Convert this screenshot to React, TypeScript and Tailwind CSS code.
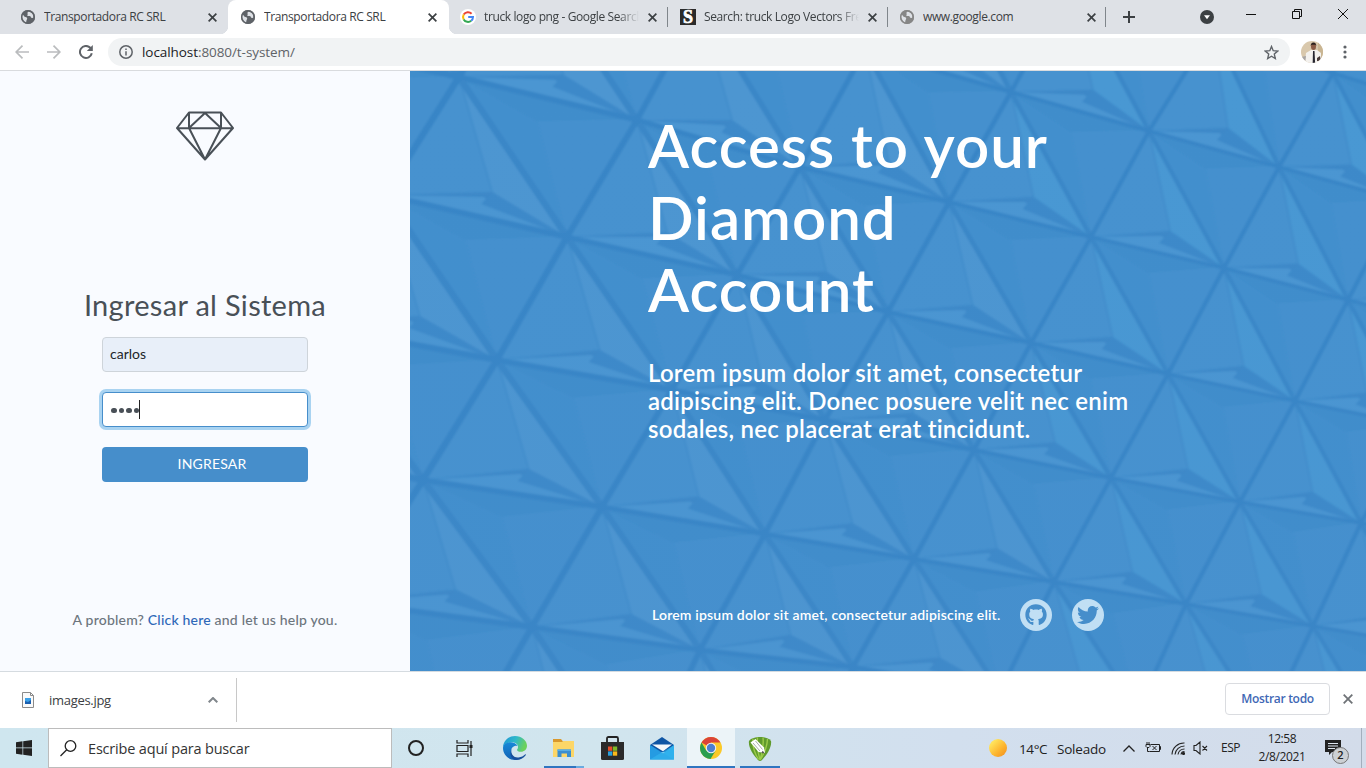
import React from "react";
import { FaGithub, FaTwitter } from "react-icons/fa";

type Pt = [number, number];

const rows: Pt[][] = [
  [[600, -155], [770, -105], [930, -60], [1070, -15], [1213, 28], [1333, 73], [1450, 110], [1560, 140], [1660, 170]],
  [[530, -40], [700, 5], [865, 50], [1011, 92], [1149, 131], [1279, 167], [1400, 200], [1510, 230], [1610, 260]],
  [[459, 77], [637, 120], [800, 167], [949, 202], [1091, 237], [1224, 268], [1348, 300], [1465, 328], [1570, 350]],
  [[385, 195], [567, 237], [737, 275], [888, 312], [1031, 343], [1168, 374], [1295, 401], [1415, 425], [1520, 450]],
  [[310, 325], [497, 360], [672, 390], [825, 420], [974, 450], [1111, 478], [1240, 502], [1361, 523], [1475, 545]],
  [[240, 450], [423, 480], [602, 507], [765, 534], [914, 559], [1054, 582], [1186, 604], [1313, 626], [1430, 646]],
  [[150, 570], [345, 602], [532, 627], [700, 650], [853, 667], [1000, 692], [1138, 710], [1265, 728], [1385, 745]],
  [[60, 720], [265, 740], [455, 760], [637, 785], [790, 800], [940, 820], [1080, 840], [1210, 855], [1330, 870]],
];
const leftFill: Pt[] = [[350, -90], [345, -90], [270, 35], [190, 150], [110, 285], [40, 410], [-50, 530], [-150, 690]];
const grid = rows.map((r, i) => [leftFill[i], ...r]);

const mix = (a: Pt, b: Pt, c: Pt, u: number, v: number, w: number): Pt => [
  a[0] * u + b[0] * v + c[0] * w,
  a[1] * u + b[1] * v + c[1] * w,
];
const pts = (...p: Pt[]) => p.map((q) => q[0].toFixed(1) + "," + q[1].toFixed(1)).join(" ");

function Facets() {
  const faces: React.ReactNode[] = [];
  const lines: React.ReactNode[] = [];
  for (let k = 0; k < grid.length; k++) {
    for (let j = 0; j < grid[k].length - 1; j++) {
      const p = grid[k][j];
      const q = grid[k][j + 1];
      const w = Math.max(4.2, 8 - p[0] / 300);
      const id = k + "-" + j;
      lines.push(<polyline key={"h" + id} points={pts(p, q)} stroke="#3985c6" strokeWidth={w * 0.85} />);
      if (k + 1 >= grid.length) continue;
      const l = grid[k + 1][j];
      const r = grid[k + 1][j + 1];
      const i = mix(p, l, r, 0.205, 0.29, 0.505);
      const i2: Pt = [i[0] + 1, i[1] + 8];
      const n = mix(p, q, r, 0.48, 0.326, 0.194);
      faces.push(
        <g key={id}>
          <polygon points={pts(p, l, i)} fill="#4692cf" />
          <polygon points={pts(p, i, r)} fill={p[0] > 1000 ? "#4998d3" : "#4e96d1"} />
          <polygon points={pts(l, i, r)} fill="#3c88c8" />
          <polygon points={pts(l, [i2[0] - 10, i2[1] - 3], r)} fill="#4c96d2" />
          <polygon points={pts(i, [i2[0] - 12, i2[1] + 4], r)} fill="#3d89c9" />
          <polygon points={pts(p, n, r)} fill="#438fcd" />
          <polygon points={pts(p, n, q)} fill="#418dcb" />
          <polygon points={pts(n, q, r)} fill="#4590ce" />
          <polyline points={pts(p, i)} stroke="#428ecc" strokeWidth="2" />
          <polyline points={pts(n, q)} stroke="#4893d0" strokeWidth="1" />
        </g>
      );
      lines.push(
        <g key={"l" + id} strokeWidth={w}>
          <polyline points={pts(p, l)} stroke="#3985c6" />
          <polyline points={pts(p, r)} stroke="#3b87c7" />
          <circle cx={p[0]} cy={p[1]} r={w * 0.75} fill="#3985c6" stroke="none" />
        </g>
      );
    }
  }
  return (
    <svg className="absolute inset-0" width="956" height="600" viewBox="410 71 956 600">
      <defs>
        <filter id="soft" x="0" y="0" width="1" height="1">
          <feGaussianBlur stdDeviation="1.1" />
        </filter>
        <linearGradient id="shade" x1="0" y1="0" x2="0" y2="1">
          <stop offset="0" stopColor="#4290cf" stopOpacity="0" />
          <stop offset="1" stopColor="#4a8bca" stopOpacity=".14" />
        </linearGradient>
      </defs>
      <g filter="url(#soft)" fill="none">
        {faces}
        {lines}
      </g>
      <rect x="410" y="71" width="956" height="600" fill="url(#shade)" />
    </svg>
  );
}

function Globe({ color }: { color: string }) {
  return (
    <svg width="16" height="16" viewBox="0 0 16 16">
      <circle cx="8" cy="8" r="7" fill={color} />
      <path d="M3 7.2c0-.8.2-1.6.6-2.3l2 2.5 1.6.6c.9.3 1.2 1 .9 1.700l-.6 1.300-.4 2.200C4.900 12.900 3 10.400 3 7.200z" fill="#dee1e6" transform="translate(-1 .3)" />
      <path d="M8.300 2.500l-1 1.500.6 1.300-1 .900 1.300.800 2 .100 1 1.700 2 .200c.7-2.600-.8-5.900-4.900-6.500z" fill="#dee1e6" />
      <circle cx="8" cy="8" r="6.300" fill="none" stroke={color} strokeWidth="1.500" />
    </svg>
  );
}

function GoogleG() {
  return (
    <svg width="16" height="16" viewBox="0 0 16 16" fill="none" strokeWidth="2">
      <circle cx="8" cy="8" r="8" fill="#fff" />
      <path d="M11.600 4.700A5 5 0 0 0 3.700 5.600" stroke="#ea4335" />
      <path d="M3.700 5.600a5 5 0 0 0 0 4.800" stroke="#fbbc05" />
      <path d="M3.700 10.400a5 5 0 0 0 7.500 1.400" stroke="#34a853" />
      <path d="M11.200 11.800A5 5 0 0 0 13 8H8.200" stroke="#4285f4" />
    </svg>
  );
}

function SIcon() {
  return (
    <div className="flex h-4 w-4 items-center justify-center bg-[#2b2b2b] font-['Liberation_Serif',serif] text-[18px] leading-4 font-bold text-white [-webkit-text-stroke:0.7px_#fff]">
      S
    </div>
  );
}

function Cross({ size, color, width }: { size: number; color: string; width: number }) {
  return (
    <svg width={size} height={size} viewBox="0 0 10 10" stroke={color} strokeWidth={width}>
      <path d="M.7.7l8.600 8.600M9.300.7L.7 9.300" />
    </svg>
  );
}

function Tab({ icon, title, active, fade, sep, size = "w-[220px]" }: { icon: React.ReactNode; title: string; active?: boolean; fade?: boolean; sep?: boolean; size?: string }) {
  return (
    <div className={"relative flex h-[34px] shrink-0 items-center pl-3 " + size + (active ? " rounded-t-lg bg-white" : "")}>
      {active && (
        <>
          <div className="absolute bottom-0 -left-2 h-2 w-2 bg-[radial-gradient(circle_at_0_0,#dee1e6_8px,#fff_8.500px)]" />
          <div className="absolute -right-2 bottom-0 h-2 w-2 bg-[radial-gradient(circle_at_100%_0,#dee1e6_8px,#fff_8.500px)]" />
        </>
      )}
      {icon}
      <div
        className={
          "ml-2 w-[155px] overflow-hidden text-[12px] tracking-[-0.38px] whitespace-nowrap text-[#3c4043]" +
          (fade ? " [mask-image:linear-gradient(to_right,#000_134px,transparent_155px)]" : "")
        }
      >
        {title}
      </div>
      <div className="ml-[9px]">
        <Cross size={9} color="#3c4043" width={1.900} />
      </div>
      {sep && <div className="absolute top-[7px] right-0 h-5 w-px bg-[#80868b]" />}
    </div>
  );
}

function Diamond() {
  return (
    <svg width="58" height="50" viewBox="0 0 58 50" fill="none" stroke="#495057" strokeWidth="2" strokeLinejoin="round">
      <path d="M13 1.500h32L57 17 29 48.500 1 17zM1 17.200h56M13 1.500V17l16 31.500L45 17V1.500M13 17L29 2l16 15" />
    </svg>
  );
}

function WinLogo() {
  return (
    <svg width="16" height="16" viewBox="0 0 16 16" fill="#222">
      <path d="M0 2.200l6.500-.9v6.300H0zM7.200 1.200L16 0v7.600H7.200zM0 8.300h6.500v6.400L0 13.800zM7.200 8.300H16V16l-8.800-1.200z" />
    </svg>
  );
}

function TaskView() {
  return (
    <svg width="17" height="17" viewBox="0 0 17 17" fill="none" stroke="#222" strokeWidth="1.200">
      <path d="M1 0v3h11V0M1 17v-3h11v3M1 5.500h11v6H1zM15 1v15" />
      <path d="M13.500 5h3v3h-3z" fill="#222" stroke="none" />
    </svg>
  );
}

function Edge() {
  return (
    <svg width="24" height="24" viewBox="0 0 24 24">
      <defs>
        <linearGradient id="e1" x1="0" y1="0" x2="1" y2=".3">
          <stop offset="0" stopColor="#1c93d6" />
          <stop offset=".55" stopColor="#2fb9c9" />
          <stop offset="1" stopColor="#6bd15c" />
        </linearGradient>
        <linearGradient id="e2" x1="0" y1="0" x2="0" y2="1">
          <stop offset="0" stopColor="#1889d8" />
          <stop offset="1" stopColor="#1262b5" />
        </linearGradient>
      </defs>
      <path d="M0 12C0 5 5.300 0 12 0s12 4.700 12 9.800c0 3.700-2.800 6-6 6-2.600 0-4-1-4-1.800 0-.700 1-1.200 1-3 0-2.500-2.300-4.700-6-4.700C4 6.300.2 9 0 12z" fill="url(#e1)" />
      <path d="M0 12c.2-3.500 3.500-5.700 7.500-5.700 3.200 0 6 1.400 7.200 3.700-1.500-1-6.700.3-6.700 5.300 0 4 3 7.500 7 8.300C7 25.500 0 19.500 0 12z" fill="url(#e2)" />
      <path d="M9.500 11c-3.300 5.500.500 11 6 10.500 3-.300 5-1.500 6.500-3 .600-.5 1.200.1.700.8C20.500 22.300 17 24 13.500 24 8.500 23.500 5 19 9.500 11z" fill="#174f9c" />
    </svg>
  );
}

function Folder() {
  return (
    <svg width="22" height="19" viewBox="0 0 22 19">
      <path d="M0 0h8l2 2.500h11V10H0z" fill="#d9982c" />
      <path d="M0 3h9l1.500-1H21v16H0z" fill="#fcd667" />
      <path d="M4.500 10.500h13.500V18h-4v-3.500h-5.500V18h-4z" fill="#3a8ed0" />
      <path d="M4.500 10.500h13.500v1.500H4.500z" fill="#57aee6" />
    </svg>
  );
}

function Store() {
  return (
    <svg width="23" height="24" viewBox="0 0 23 24">
      <path d="M6 7V2.500Q6 1 7.500 1h8Q17 1 17 2.500V7" fill="none" stroke="#222" strokeWidth="1.800" />
      <path d="M0 6h23v16.500Q23 24 21.500 24h-20Q0 24 0 22.500z" fill="#2a2a2a" />
      <path d="M7 10.500h4.300v4.300H7z" fill="#e94f2b" />
      <path d="M11.900 10.500h4.300v4.300h-4.300z" fill="#7eba28" />
      <path d="M7 15.400h4.300v4.300H7z" fill="#2aa2e0" />
      <path d="M11.900 15.400h4.300v4.300h-4.300z" fill="#f8b91b" />
    </svg>
  );
}

function Mail() {
  return (
    <svg width="24" height="23" viewBox="0 0 24 23">
      <path d="M0 8L12 0l12 8v7H0z" fill="#0f56a5" />
      <path d="M0 8l13 8.500L24 8v14.500H0z" fill="#2aa9e8" />
      <path d="M0 22.500V8l24 14.500z" fill="#1f8edb" opacity=".5" />
      <path d="M0 22.500L24 8v14.500z" fill="#35b8f0" opacity=".6" />
      <path d="M2 7.600h20l-9 6.700z" fill="#f4f8fb" />
    </svg>
  );
}

function Chrome() {
  return (
    <svg width="22" height="22" viewBox="0 0 22 22">
      <circle cx="11" cy="11" r="11" fill="#fbc928" />
      <path d="M11 11L1.500 5.500A11 11 0 0 1 20.500 5.500H11z" fill="#db4437" />
      <path d="M1.500 5.500A11 11 0 0 0 10.500 22l5-8.300L11 11l-4.700 2.700z" fill="#2b9e50" />
      <circle cx="11" cy="11" r="5.200" fill="#f3f3f3" />
      <circle cx="11" cy="11" r="4.200" fill="#4c7fd0" />
    </svg>
  );
}

function Corel() {
  return (
    <svg className="mt-[3px]" width="24" height="24" viewBox="0 0 24 24">
      <path d="M1 4C3 1 8 0 12 0s9 1 11 4c1 6-4 14-9 19q-2 2-4 0C5 18 0 10 1 4z" fill="#5f9a2c" />
      <path d="M5 1.800Q4 12 10.500 22.500M9.500.5Q8.500 12 12 23M15 .5q1 11-3 22.500M19.500 2q-.5 10-7 20.500" stroke="#9ccb4a" fill="none" strokeWidth="1.400" />
      <path d="M2.500 5.500L7.500 2l8.500 8.500 1 5.500-6.500-1z" fill="#fff" />
      <path d="M5 6l7 8M7.500 4l7 8.500" stroke="#8f9b8f" strokeWidth=".8" />
      <path d="M14.700 13.800l2.300 2.700-3.700-.6z" fill="#555" />
    </svg>
  );
}

function Cell({ children, className = "w-[49px]" }: { children: React.ReactNode; className?: string }) {
  return <div className={"flex h-10 shrink-0 items-center justify-center " + className}>{children}</div>;
}

const ui = "font-['Open_Sans','Noto_Sans',sans-serif]";
const brand = "font-[Lato,'Noto_Sans',sans-serif] [font-variant-ligatures:none]";

function Browser() {
  return (
    <>
      <div className="flex h-[34px] bg-[#dee1e6] pl-2">
        <Tab icon={<Globe color="#5f6368" />} title="Transportadora RC SRL" />
        <Tab icon={<Globe color="#5f6368" />} title="Transportadora RC SRL" active size="w-[221px] mr-[-1px]" />
        <Tab icon={<GoogleG />} title="truck logo png - Google Search" fade sep />
        <Tab icon={<SIcon />} title="Search: truck Logo Vectors Free" fade sep />
        <Tab icon={<Globe color="#868686" />} title="www.google.com" sep size="w-[219px] ml-[-1px]" />
        <div className="ml-[17px] flex items-center">
          <svg width="12" height="12" viewBox="0 0 12 12" stroke="#3c4043" strokeWidth="2">
            <path d="M6 0v12M0 6h12" />
          </svg>
        </div>
        <div className="ml-[65px] flex items-center">
          <svg width="14" height="14" viewBox="0 0 14 14">
            <circle cx="7" cy="7" r="7" fill="#3c4043" />
            <path d="M4 5.300h6L7 9.300z" fill="#fff" />
          </svg>
        </div>
        <svg className="mt-[8px] ml-[32px]" width="104" height="12" viewBox="0 0 104 12" fill="none" stroke="#111">
          <path d="M0 6.500h10" />
          <path d="M46.500 3.500h7v7h-7zM48.500 3.500v-2h7v7h-2" />
          <path d="M92 1l10 10M102 1L92 11" />
        </svg>
      </div>

      <div className="flex h-9 items-center bg-white pl-[15px]">
        <svg width="14" height="14" viewBox="0 0 14 14" fill="none" stroke="#babcbe" strokeWidth="1.700">
          <path d="M14 7H1.200M7.500.7L1.200 7l6.300 6.300" />
        </svg>
        <svg className="ml-[18px]" width="14" height="14" viewBox="0 0 14 14" fill="none" stroke="#babcbe" strokeWidth="1.700">
          <path d="M0 7h12.800M6.500.7L12.800 7l-6.300 6.300" />
        </svg>
        <svg className="ml-[18px]" width="14" height="14" viewBox="0 0 14 14" fill="none" stroke="#5f6368" strokeWidth="2">
          <path d="M12.800 8.300A6 6 0 1 1 11.300 2.800L12.500 4" />
          <path d="M13.800 0v6H7.800z" fill="#5f6368" stroke="none" />
        </svg>
        <div className="ml-[15px] flex h-7 w-[1182px] items-center rounded-full bg-[#f1f3f4] pr-[11px] pl-[11px]">
          <svg width="14" height="14" viewBox="0 0 14 14" fill="none" stroke="#5f6368" strokeWidth="1.500">
            <circle cx="7" cy="7" r="6.200" />
            <path d="M7 6.200v4.300M7 3.500v1.600" />
          </svg>
          <div className="ml-[9px] flex-1 text-[13.5px] tracking-[-0.07px] text-[#5f6368]">
            <span className="text-[#202124]">localhost</span>:8080/t-system/
          </div>
          <svg width="15" height="15" viewBox="0 0 15 15" fill="none" stroke="#5f6368" strokeWidth="1.400">
            <path d="M7.500 1.500l1.700 4.200 4.500.4-3.400 3 1 4.400-3.800-2.300-3.800 2.300 1-4.400-3.400-3 4.500-.400z" />
          </svg>
        </div>
        <svg className="ml-[11px]" width="22" height="22" viewBox="0 0 22 22">
          <defs>
            <clipPath id="face">
              <circle cx="11" cy="11" r="11" />
            </clipPath>
          </defs>
          <g clipPath="url(#face)">
            <path d="M0 0h22v22H0z" fill="#d9c8ac" />
            <path d="M17 0h5v22h-5z" fill="#c9b592" />
            <path d="M4 22l1-10 5-3h6l4 3v10z" fill="#f3f1ee" />
            <path d="M0 16l5-1-1 7H0z" fill="#a8a6a6" />
            <path d="M12 10h1.500l.6 12h-2.400z" fill="#25252f" />
            <ellipse cx="12.500" cy="5.500" rx="2.500" ry="3.500" fill="#8c5c46" />
            <path d="M9.700 5Q9.700 1.500 12.500 1.500t2.800 3.500l-.7-1.300h-4z" fill="#2b211e" />
            <path d="M16 17l3-2 1 5h-4z" fill="#4a3c3a" />
          </g>
        </svg>
        <svg className="ml-[20px]" width="4" height="14" viewBox="0 0 4 14" fill="#5f6368">
          <circle cx="2" cy="2" r="1.600" />
          <circle cx="2" cy="7" r="1.600" />
          <circle cx="2" cy="12" r="1.600" />
        </svg>
      </div>
      <div className="h-px bg-[#d9dbde]" />
    </>
  );
}

function Login() {
  return (
    <div className={"flex h-[600px] w-[410px] shrink-0 flex-col items-center bg-[#f9fbff] pt-10 " + brand}>
      <Diamond />
      <h1 className="mt-[124px] text-[29px] leading-10 tracking-[0.3px] whitespace-nowrap text-[#495057]">Ingresar al Sistema</h1>
      <div className="mt-[12px] flex h-[35px] w-[206px] items-center rounded-[4px] border border-[#ced4da] bg-[#e8eff9] pb-[2px] pl-[7px] text-[14px] text-[#212529]">
        carlos
      </div>
      <div className="mt-5 flex h-[35px] w-[206px] items-center rounded-[4px] border border-[#468ecb] bg-white pl-[8px] shadow-[0_0_0_3px_#a9d3f1]">
        <div className="flex gap-[2px] pt-[2px]">
          <i className="h-[5.500px] w-[5.500px] rounded-full bg-[#495057]" />
          <i className="h-[5.500px] w-[5.500px] rounded-full bg-[#495057]" />
          <i className="h-[5.500px] w-[5.500px] rounded-full bg-[#495057]" />
          <i className="h-[5.500px] w-[5.500px] rounded-full bg-[#495057]" />
        </div>
        <div className="h-[19px] w-px bg-[#222]" />
      </div>
      <div className="mt-5 flex h-[35px] w-[206px] items-center justify-center rounded-[4px] bg-[#468ecb] pb-[2px] pl-[14px] text-[14px] tracking-[0.2px] text-white">
        INGRESAR
      </div>
      <p className="mt-[128px] text-[14px] leading-5 font-medium tracking-[0.2px] whitespace-nowrap text-[#6c757d]">
        A problem? <span className="text-[#2f68b8]">Click here</span> and let us help you.
      </p>
    </div>
  );
}

function Hero() {
  return (
    <div className={"relative h-[600px] flex-1 overflow-hidden bg-[#4490ce] " + brand}>
      <Facets />
      <div className="relative pt-[38px] pl-[238px] whitespace-nowrap text-white">
        <h2 className="text-[60px] leading-[72px] font-semibold tracking-[1px]">
          Access to your
          <br />
          Diamond
          <br />
          Account
        </h2>
        <p className="mt-[34px] text-[24px] leading-7 font-semibold tracking-[0.25px]">
          Lorem ipsum dolor sit amet, consectetur
          <br />
          adipiscing elit. Donec posuere velit nec enim
          <br />
          sodales, nec placerat erat tincidunt.
        </p>
        <div className="mt-[156px] flex items-center pl-1">
          <span className="w-[348px] pb-[2px] text-[14px] font-semibold tracking-[0.18px]">Lorem ipsum dolor sit amet, consectetur adipiscing elit.</span>
          <span className="ml-5 flex h-8 w-8 items-center justify-center rounded-full bg-[#c1dff4] text-[#468ecb]">
            <FaGithub size={22} />
          </span>
          <span className="ml-5 flex h-8 w-8 items-center justify-center rounded-full bg-[#c1dff4] text-[#468ecb]">
            <FaTwitter size={22} />
          </span>
        </div>
      </div>
    </div>
  );
}

function Shelf() {
  return (
    <div className="flex h-[57px] items-center border-t border-[#d5dbe0] bg-white pl-[22px]">
      <svg width="12" height="16" viewBox="0 0 12 16">
        <path d="M.5.5h8l3 3v12H.5z" fill="#fafafa" stroke="#8b8b8b" />
        <path d="M8.500.5v3h3" fill="none" stroke="#8b8b8b" />
        <path d="M3 6h6v6H3z" fill="#1b5faf" />
        <path d="M3 6h6v2l-3 2-3-1z" fill="#3aa0e8" />
      </svg>
      <div className="ml-[15px] w-[159px] pt-[2px] text-[13px] tracking-[-0.3px] text-[#3c4043]">images.jpg</div>
      <svg width="10" height="6" viewBox="0 0 10 6" fill="none" stroke="#80868b" strokeWidth="2">
        <path d="M.7 5.300L5 1l4.300 4.300" />
      </svg>
      <div className="ml-[18px] h-11 w-px bg-[#c8c8c8]" />
      <div className="mr-[13px] mb-[2px] ml-auto flex h-8 w-[105px] items-center justify-center rounded-[4px] border border-[#dadce0] text-[12px] font-semibold tracking-[-0.3px] text-[#3f68b5]">
        Mostrar todo
      </div>
      <div className="mr-[13px] mb-[2px]">
        <Cross size={10} color="#6f7377" width={1.800} />
      </div>
    </div>
  );
}

function Taskbar() {
  return (
    <div className="flex h-10 bg-[linear-gradient(to_right,#cfe6ef,#d1e5ee_45%,#d2dfee_70%,#d3dcea)] text-[#222]">
      <Cell className="w-12">
        <WinLogo />
      </Cell>
      <div className="flex w-[344px] shrink-0 items-center border border-[#bcbcbc] bg-white pl-[11px]">
        <svg width="17" height="17" viewBox="0 0 17 17" fill="none" stroke="#222" strokeWidth="1.300">
          <circle cx="10.500" cy="6" r="5.300" />
          <path d="M6.700 9.800L.5 16" />
        </svg>
        <div className="ml-[11px] pt-[2px] text-[14.500px] tracking-[-0.18px] text-[#333]">Escribe aquí para buscar</div>
      </div>
      <Cell className="w-12">
        <div className="h-4 w-4 rounded-full border-[2.500px] border-[#222]" />
      </Cell>
      <Cell className="w-12">
        <TaskView />
      </Cell>
      <Cell className="w-[54px]">
        <Edge />
      </Cell>
      <div className="relative">
        <Cell className="w-[43px]">
          <Folder />
        </Cell>
        <div className="absolute bottom-0 left-[2px] flex h-[2px] w-10">
          <div className="w-8 bg-[#2f75c0]" />
          <div className="w-2 bg-[#6aabe0]" />
        </div>
      </div>
      <Cell className="w-[55px]">
        <Store />
      </Cell>
      <Cell className="w-[44px]">
        <Mail />
      </Cell>
      <Cell className="ml-[3px] w-12 border-b-2 border-[#2f75c0] bg-[#ecf4f8] pt-[2px]">
        <Chrome />
      </Cell>
      <Cell className="ml-[5px] w-10 border-b-2 border-[#2f75c0]">
        <Corel />
      </Cell>
      <div className="ml-auto flex items-center">
        <div className="h-[18px] w-[18px] rounded-full bg-[linear-gradient(135deg,#ffe25a_20%,#fdb52e_60%,#f28a1c)]" />
        <div className="ml-[12px] w-[38px] pt-[2px] text-[13.500px] tracking-[-0.4px] whitespace-nowrap">14°C</div>
        <div className="w-[66px] pt-[2px] text-[13.500px] tracking-[-0.2px]">Soleado</div>
        <svg width="12" height="7" viewBox="0 0 12 7" fill="none" stroke="#222" strokeWidth="1.300">
          <path d="M.5 6.500L6 1l5.500 5.500" />
        </svg>
        <svg className="ml-[10px]" width="16" height="14" viewBox="0 0 16 14" fill="none" stroke="#222">
          <path d="M5.500 3.500h9v7h-10M14.500 5.500h1v3h-1M2.500 6.500v4h2M1 3.500h4v2L4 6.500H2L1 5.500zM2 1v2.500M4 1v2.500M7.500 5l4 4M11.500 5l-4 4" />
        </svg>
        <svg className="ml-[10px]" width="14" height="14" viewBox="0 0 14 14" fill="none" stroke="#222" strokeWidth="1.100">
          <path d="M1 13.500A12 12 0 0 1 13.500 2M4 13.500A9.500 9.500 0 0 1 13.500 5M7 13.500A6.500 6.500 0 0 1 13.500 8M10 13.500a3.500 3.500 0 0 1 3.500-3" />
          <circle cx="12.500" cy="12.500" r="1" fill="#222" />
        </svg>
        <svg className="ml-[8px]" width="16" height="14" viewBox="0 0 16 14" fill="none" stroke="#222" strokeWidth="1.100">
          <path d="M1 4.500h2l4-3.500v12L3 9.500H1zM9.500 5l4.500 4.500M14 5L9.500 9.500" />
        </svg>
        <div className="ml-[12px] w-[20px] text-[12px] tracking-[-0.5px]">ESP</div>
        <div className="ml-[14px] w-[54px] text-center text-[12px] leading-[18px] tracking-[-0.4px] whitespace-nowrap">
          12:58
          <br />
          2/8/2021
        </div>
        <div className="relative ml-[16px] h-[17px] w-[17px]">
          <svg width="17" height="17" viewBox="0 0 17 17">
            <path d="M0 0h16v12H7l-3 3v-3H0z" fill="#222" />
            <path d="M3 3.500h10M3 6h10M3 8.500h7" stroke="#dde5ee" />
          </svg>
          <div className="absolute top-[7px] left-[7px] flex h-[17px] w-[17px] items-center justify-center rounded-full border border-[#777] bg-[#ccd0d4] text-[11px] font-semibold">
            2
          </div>
        </div>
        <div className="mr-[4px] ml-[19px] h-10 w-px bg-[#a3afbd]" />
      </div>
    </div>
  );
}

export default function App() {
  return (
    <div className={"flex h-[768px] w-[1366px] flex-col overflow-hidden " + ui}>
      <Browser />
      <div className="flex">
        <Login />
        <Hero />
      </div>
      <Shelf />
      <Taskbar />
    </div>
  );
}
